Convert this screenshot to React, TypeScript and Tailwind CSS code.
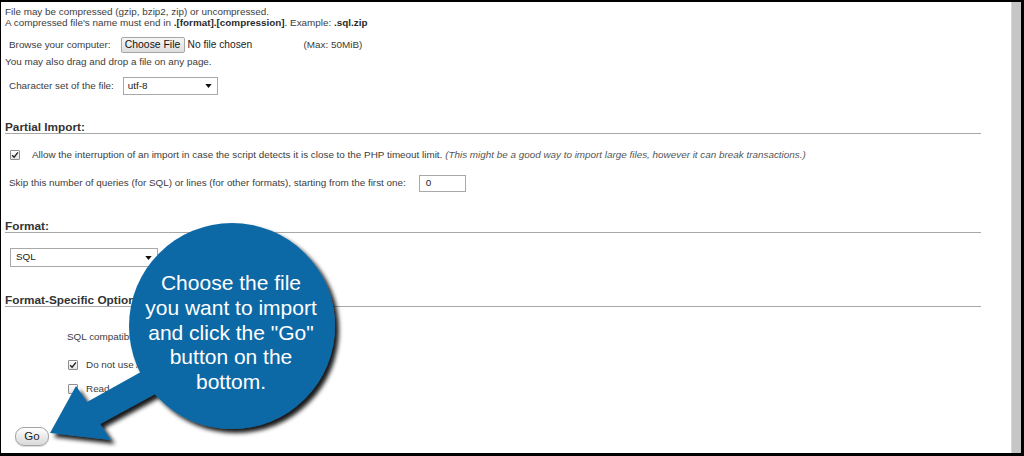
import type { ReactNode } from 'react';

function CheckBox({ checked }: { checked?: boolean }) {
  return (
    <span className="inline-flex h-[10px] w-[10px] shrink-0 items-center justify-center rounded-[1px] border border-[#8e8e8e] bg-gradient-to-b from-white to-[#e4e4e4]">
      {checked && (
        <svg viewBox="0 0 10 10" className="h-[8px] w-[8px]">
          <path d="M1.4 5.3 L3.9 7.8 L8.7 1.7" fill="none" stroke="#222" strokeWidth="1.7" />
        </svg>
      )}
    </span>
  );
}

function Caret() {
  return (
    <svg viewBox="0 0 8 5" className="h-[4px] w-[7px]">
      <path d="M0 0 H8 L4 5 Z" fill="#111" />
    </svg>
  );
}

function Heading({ children, className }: { children: ReactNode; className: string }) {
  return (
    <div className={`border-b border-[#a8a8a8] text-[11.8px] leading-[12px] font-bold text-[#333] ${className}`}>
      {children}
    </div>
  );
}

function Callout() {
  return (
    <>
      <svg className="pointer-events-none absolute left-0 top-0 h-[456px] w-[400px]" viewBox="0 0 400 456">
        <defs>
          <filter id="callout-shadow" x="-20%" y="-20%" width="140%" height="140%">
            <feDropShadow dx="4" dy="4" stdDeviation="2.2" floodColor="#000" floodOpacity="0.9" />
          </filter>
        </defs>
        <g filter="url(#callout-shadow)" fill="#0f69a6">
          <circle cx="232" cy="326" r="103" />
          <polygon points="50,433 76,386 87,402 166,358 179,381 100,424 111,440" />
        </g>
      </svg>
      <div className="pointer-events-none absolute left-[126px] top-[271px] w-[210px] text-center text-[21px] leading-[24.75px] text-white">
        Choose the file
        <br />
        you want to import
        <br />
        and click the "Go"
        <br />
        button on the
        <br />
        bottom.
      </div>
    </>
  );
}

export default function App() {
  return (
    <div className="relative h-[456px] w-[1024px] overflow-hidden bg-black pb-[3px] pl-[1px] pr-[3px] pt-[2px] font-['Liberation_Sans',Arial,sans-serif] text-[9.9px] text-[#3c3c3c]">
      <div className="flex h-full bg-white">
        <div className="min-w-0 flex-1 pl-[4px] pr-[30px] pt-[4px]">
          <div className="leading-[11px]">
            <div>File may be compressed (gzip, bzip2, zip) or uncompressed.</div>
            <div>
              A compressed file's name must end in <b className="text-[#2a2a2a]">.[format].[compression]</b>. Example:{' '}
              <b className="text-[#2a2a2a]">.sql.zip</b>
            </div>
          </div>

          <div className="mt-[9px] flex h-[16px] items-center pl-[4px]">
            <span>Browse your computer:</span>
            <span className="ml-[10px] flex h-[16px] w-[64px] items-center justify-center rounded-[2px] border border-[#a6a6a6] bg-gradient-to-b from-[#f6f6f6] to-[#dedede] text-[10.4px] text-[#111]">
              Choose File
            </span>
            <span className="ml-[3px] w-[116px] text-[10.2px] text-[#222]">No file chosen</span>
            <span>(Max: 50MiB)</span>
          </div>

          <div className="mt-[3px] h-[12px] leading-[12px]">You may also drag and drop a file on any page.</div>

          <div className="mt-[9px] flex h-[18px] items-center pl-[4px]">
            <span>Character set of the file:</span>
            <span className="ml-[9px] flex h-[18px] w-[95px] items-center justify-between border border-[#a9a9a9] bg-white pl-[4px] pr-[5px] text-[#222]">
              utf-8
              <Caret />
            </span>
          </div>

          <Heading className="mt-[26px]">Partial Import:</Heading>

          <div className="mt-[14px] flex h-[14px] items-center pl-[5px]">
            <CheckBox checked />
            <span className="ml-[12px]">
              Allow the interruption of an import in case the script detects it is close to the PHP timeout limit.{' '}
              <i className="text-[#555]">
                (This might be a good way to import large files, however it can break transactions.)
              </i>
            </span>
          </div>

          <div className="mt-[13px] flex h-[17px] items-center pl-[4px]">
            <span>Skip this number of queries (for SQL) or lines (for other formats), starting from the first one:</span>
            <span className="ml-[13px] flex h-[17px] w-[47px] items-center border border-[#a9a9a9] bg-white pl-[6px] text-[#222]">
              0
            </span>
          </div>

          <Heading className="mt-[28px]">Format:</Heading>

          <div className="mt-[15px] pl-[5px]">
            <span className="flex h-[19px] w-[148px] items-center justify-between border border-[#a9a9a9] bg-white pl-[5px] pr-[5px] text-[#222]">
              SQL
              <Caret />
            </span>
          </div>

          <Heading className="mt-[27px]">Format-Specific Options:</Heading>

          <div className="mt-[23px] flex h-[14px] items-center pl-[62px]">
            <span>SQL compatibility mode:</span>
            <span className="ml-[8px] flex h-[17px] w-[80px] items-center justify-between border border-[#a9a9a9] pl-[4px] pr-[4px]">
              NONE
              <Caret />
            </span>
          </div>

          <div className="mt-[14px] flex h-[14px] items-center pl-[63px]">
            <CheckBox checked />
            <span className="ml-[8px]">Do not use AUTO_INCREMENT for zero values</span>
          </div>

          <div className="mt-[10px] flex h-[14px] items-center pl-[63px]">
            <CheckBox />
            <span className="ml-[8px]">Read as multibytes</span>
          </div>

          <div className="mt-[31px] pl-[10px]">
            <span className="flex h-[19px] w-[34px] items-center justify-center rounded-[9px] border border-[#a3a3a3] bg-gradient-to-b from-white to-[#d9d9d9] text-[11.5px] text-[#222] shadow-[0_1px_1px_rgba(0,0,0,0.15)]">
              Go
            </span>
          </div>
        </div>
        <div className="w-[10px] border-l border-[#d8d8d8] bg-[#c6c6c6]" />
      </div>
      <Callout />
    </div>
  );
}
